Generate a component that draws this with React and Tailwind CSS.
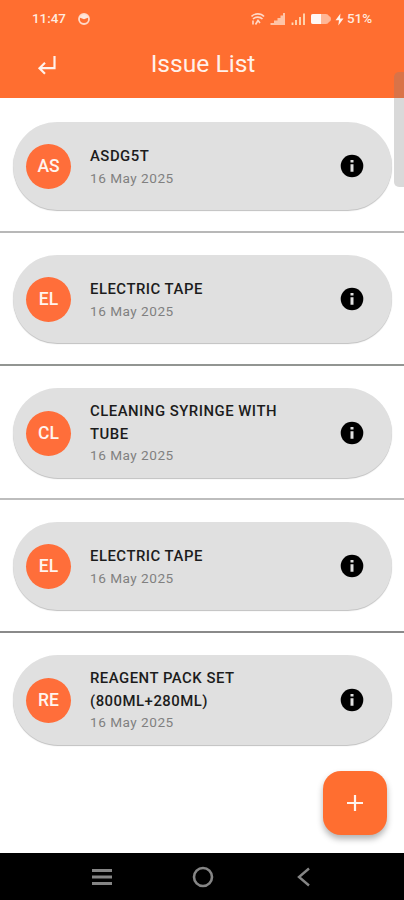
import React from 'react';

// Issues shown in the list, with the tone of the line under each row
const issues = [
  { id: 1, initials: 'AS', lines: ['ASDG5T'], date: '16 May 2025', line: 'border-[#b8b8b8]' },
  { id: 2, initials: 'EL', lines: ['ELECTRIC TAPE'], date: '16 May 2025', line: 'border-[#929592]' },
  { id: 3, initials: 'CL', lines: ['CLEANING SYRINGE WITH', 'TUBE'], date: '16 May 2025', line: 'border-[#bdbdbd]' },
  { id: 4, initials: 'EL', lines: ['ELECTRIC TAPE'], date: '16 May 2025', line: 'border-[#8a8a8a]' },
  { id: 5, initials: 'RE', lines: ['REAGENT PACK SET', '(800ML+280ML)'], date: '16 May 2025', line: 'border-transparent' },
];

// Android status bar
function StatusBar() {
  return (
    <div className="flex h-[38px] items-center pl-8 text-[13.400px] font-medium text-[#ffeadf]">
      <span className="w-[34px] pt-px">11:47</span>
      <svg className="ml-3" width="12" height="12" viewBox="0 0 12 12" fill="none">
        <circle cx="6" cy="6" r="5" stroke="#ffd9c8" strokeWidth="1.8" />
        <path d="M1.500 4.500C2.500 0.500 9.500 0.500 10.500 4.500L6 6.300Z" fill="#ffe6da" />
      </svg>
      <svg className="ml-[161px]" width="88" height="14" viewBox="0 0 88 14" fill="none">
        <g stroke="#ffd9c8" strokeWidth="1.600">
          <path d="M0.500 4.500C3.500 1 10 1 13 4.500" />
          <path d="M2 7C4.500 4.500 9 4.500 11.500 7" />
          <path d="M2 12.500V8.500M4.500 12.500L7 8.500L9 11" />
        </g>
        <path d="M19.500 13V11H23V8.500H26.500V6H29.500V3.500H32V1H34V13Z" fill="#ffc4a6" />
        <path d="M41.500 13V10.500M45 13V8M49 13V5M53 13V1.500" stroke="#ffdcb8" strokeWidth="1.800" />
        <path d="M62 2H75a4 4 0 0 1 3 2q2 .5 2 3t-2 3a4 4 0 0 1-3 2H62q-2 0-2-2V4q0-2 2-2Z" fill="#ffb796" />
        <path d="M62 2H70V12H62q-2 0-2-2V4q0-2 2-2Z" fill="#fff8f4" />
      </svg>
      <svg className="-ml-[4px]" width="9" height="13" viewBox="0 0 9 13" fill="#fff1ea">
        <path d="M5.500 0.500L0.500 7.300H4L3.300 12.500L8.500 5.500H5Z" />
      </svg>
      <span className="ml-[3px] pt-px text-[13.400px]">51%</span>
    </div>
  );
}

// Orange app bar with the back button and title
function Header() {
  return (
    <header className="h-[98px] bg-[#ff6e30]">
      <StatusBar />
      <div className="relative flex h-[52px] items-center justify-center">
        <svg className="absolute left-[37px] top-[16px]" width="20" height="22" viewBox="0 0 20 22" fill="none" stroke="#fff1ea" strokeWidth="2.200">
          <path d="M17.500 2V14.200H3M8 8.800L2.500 14.200L8 19.700" />
        </svg>
        <h1 className="pl-[2px] text-[24.600px] text-[#fff1ea]">Issue List</h1>
      </div>
    </header>
  );
}

function InfoIcon() {
  return (
    <svg width="24" height="24" viewBox="0 0 24 24">
      <circle cx="12" cy="12" r="11.300" fill="#000" />
      <path d="M10.500 6h3v2.500h-3zM10.500 10.300h3v7.500h-3z" fill="#e0e0e0" />
    </svg>
  );
}

// One issue card and the line below it
function IssueRow({ issue }) {
  const tall = issue.lines.length > 1;

  return (
    <li className={`border-b-2 pt-[22px] pl-[13px] pr-3 ${tall ? 'pb-5' : 'pb-[21px]'} ${issue.line}`}>
      <div className={`flex items-center rounded-full bg-[#e0e0e0] pl-[13px] pr-7 shadow-[0_1px_1px_rgba(0,0,0,0.25)] ${tall ? 'h-[90px]' : 'h-[88px]'}`}>
        <div className="flex size-[45px] items-center justify-center rounded-full bg-[#ff6e3a] text-[17.500px] font-medium text-[#fff4ee]">
          {issue.initials}
        </div>
        <div className={`ml-[19px] flex-1 ${tall ? '' : 'pt-[3px]'}`}>
          {issue.lines.map((text) => (
            <p key={text} className="text-[14.900px] leading-[22.500px] font-medium tracking-[0.500px] whitespace-nowrap text-[#1c1c1c]">{text}</p>
          ))}
          <p className={`text-[13.600px] tracking-[0.500px] text-[#808080] ${tall ? 'leading-[21px]' : 'leading-[23px]'}`}>{issue.date}</p>
        </div>
        <InfoIcon />
      </div>
    </li>
  );
}

// Android navigation bar
function NavBar() {
  return (
    <nav className="h-[47px] bg-black">
      <svg width="404" height="47" viewBox="0 0 404 47" fill="none" stroke="#858585">
        <path d="M92 17.500H112M92 24H112M92 30.500H112" strokeWidth="2.800" />
        <circle cx="203" cy="24" r="9" strokeWidth="2.600" />
        <path d="M309 15.500L299 24L309 32.500" strokeWidth="2.400" />
      </svg>
    </nav>
  );
}

export default function App() {
  return (
    <div className="relative flex h-[900px] w-[404px] flex-col overflow-hidden bg-white font-['Roboto',sans-serif]">
      <Header />
      <main className="flex-1 pt-[2px]">
        <ul>
          {issues.map((issue) => (
            <IssueRow key={issue.id} issue={issue} />
          ))}
        </ul>
      </main>
      <NavBar />
      {/* Edge panel handle */}
      <div className="absolute top-[72px] right-0 h-[115px] w-[10px] rounded-l-[5px] bg-[#808080]/30" />
      {/* Add button */}
      <button className="absolute top-[771px] left-[323px] flex size-[64px] items-center justify-center rounded-[18px] bg-[#ff6e30] shadow-[0_4px_6px_rgba(0,0,0,0.3)]">
        <svg width="18" height="18" viewBox="0 0 18 18" stroke="#fff4ee" strokeWidth="2.200">
          <path d="M9 1V17M1 9H17" />
        </svg>
      </button>
    </div>
  );
}
